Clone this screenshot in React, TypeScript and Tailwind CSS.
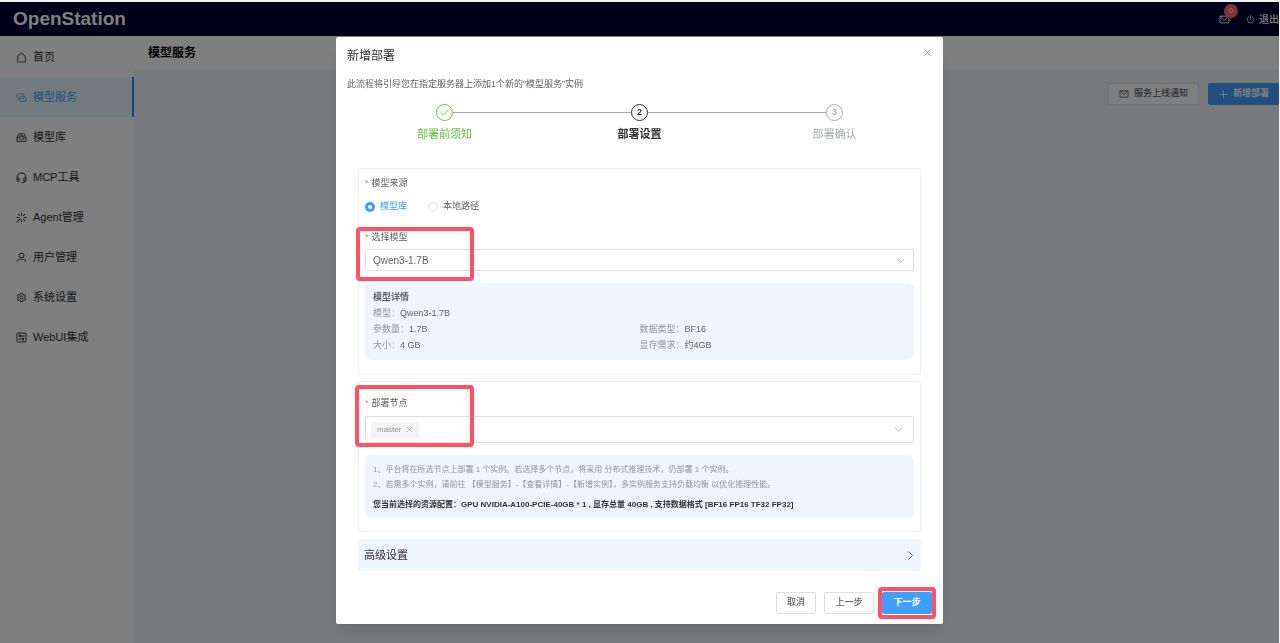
import React, { useState } from "react";
import { AiOutlineSetting } from "react-icons/ai";

const MESSAGE_PATH =
  "M128 224v512a64 64 0 0 0 64 64h640a64 64 0 0 0 64-64V224zm0-64h768a64 64 0 0 1 64 64v512a128 128 0 0 1-128 128H192A128 128 0 0 1 64 736V224a64 64 0 0 1 64-64M904 224 656.512 506.88a192 192 0 0 1-289.024 0L120 224zm-698.944 0 210.56 240.704a128 128 0 0 0 192.704 0L818.944 224z";

const HOUSE_PATH =
  "M192 413.952V896h640V413.952L512 147.328zM139.52 374.4l352-293.312a32 32 0 0 1 40.96 0l352 293.312A32 32 0 0 1 896 398.976V928a32 32 0 0 1-32 32H160a32 32 0 0 1-32-32V398.976c0-9.472 4.224-18.496 11.52-24.576";

const CONNECTION_PATH =
  "M640 384v64H448a128 128 0 0 0-128 128v128a128 128 0 0 0 128 128h320a128 128 0 0 0 128-128V576a128 128 0 0 0-64-110.848V394.88c74.56 26.368 128 97.472 128 181.056v128a192 192 0 0 1-192 192H448a192 192 0 0 1-192-192V576a192 192 0 0 1 192-192zM384 640v-64h192a128 128 0 0 0 128-128V320a128 128 0 0 0-128-128H256a128 128 0 0 0-128 128v128a128 128 0 0 0 64 110.848v70.272A192.06 192.06 0 0 1 64 448V320a192 192 0 0 1 192-192h320a192 192 0 0 1 192 192v128a192 192 0 0 1-192 192z";

const BOX_PATH =
  "M288 384h448v64H288zm96-128h256v64H384zM131.456 512H384v128h256V512h252.544L721.856 192H302.144zM896 576H704v128H320V576H128v256h768zM275.776 128h472.448a32 32 0 0 1 28.608 17.664l179.84 359.552A32 32 0 0 1 960 519.552V864a32 32 0 0 1-32 32H96a32 32 0 0 1-32-32V519.552a32 32 0 0 1 3.392-14.336l179.776-359.552A32 32 0 0 1 275.776 128";

const USER_PATH =
  "M512 512a192 192 0 1 0 0-384 192 192 0 0 0 0 384m0 64a256 256 0 1 1 0-512 256 256 0 0 1 0 512m320 320v-96a96 96 0 0 0-96-96H288a96 96 0 0 0-96 96v96a32 32 0 1 1-64 0v-96a160 160 0 0 1 160-160h448a160 160 0 0 1 160 160v96a32 32 0 1 1-64 0";

const FillIcon = ({ d, className }: { d: string; className: string }) => (
  <svg
    viewBox="0 0 1024 1024"
    fill="currentColor"
    stroke="currentColor"
    strokeWidth="16"
    className={className}
    aria-hidden="true"
  >
    <path d={d} />
  </svg>
);

const LineIcon = ({ d, className }: { d: string; className: string }) => (
  <svg
    viewBox="0 0 24 24"
    fill="none"
    stroke="currentColor"
    strokeWidth="2.2"
    strokeLinecap="round"
    strokeLinejoin="round"
    className={className}
    aria-hidden="true"
  >
    <path d={d} />
  </svg>
);

const HEADSET =
  "M2.3 15.5V12a9.7 9.7 0 0 1 19.4 0v3.5M2.3 15a2.3 2.3 0 0 1 4.6 0v3a2.3 2.3 0 0 1-4.6 0zM17.1 15a2.3 2.3 0 0 1 4.6 0v3a2.3 2.3 0 0 1-4.6 0zM19.4 20.3c-.6 1.8-2 2.7-4.4 2.7h-2";
const STICK =
  "M12 2v4.5M12 17.5V22M2 12h4.5M17.5 12H22M5 5l3.2 3.2M19 5l-3.2 3.2M19 19l-3.2-3.2M9 15l-7 7";
const SETUP =
  "M5 2.2h14a2.8 2.8 0 0 1 2.8 2.8v14a2.8 2.8 0 0 1-2.8 2.8H5A2.8 2.8 0 0 1 2.2 19V5A2.8 2.8 0 0 1 5 2.2zM7 8.5a1.8 1.8 0 1 0 3.6 0 1.8 1.8 0 1 0-3.6 0M11 8.5h7M13.4 15.5a1.8 1.8 0 1 0 3.6 0 1.8 1.8 0 1 0-3.6 0M6 15.5h7";
const POWER = "M12 2v10M7.5 4.2a9 9 0 1 0 9 0";
const CROSS = "M4 4l16 16M20 4L4 20";
const PLUS = "M12 2v20M2 12h20";
const DOWN = "M3 8l9 9 9-9";
const RIGHT = "M7 2l10 10L7 22";
const CHECK = "M3 13l6 6L21 6";

const iconSize = "w-[11px] h-[11px]";

const menu = [
  { name: "首页", icon: <FillIcon d={HOUSE_PATH} className={iconSize} /> },
  { name: "模型服务", icon: <FillIcon d={CONNECTION_PATH} className={iconSize} />, active: true },
  { name: "模型库", icon: <FillIcon d={BOX_PATH} className={iconSize} /> },
  { name: "MCP工具", icon: <LineIcon d={HEADSET} className={iconSize} /> },
  { name: "Agent管理", icon: <LineIcon d={STICK} className={iconSize} /> },
  { name: "用户管理", icon: <FillIcon d={USER_PATH} className={iconSize} /> },
  { name: "系统设置", icon: <AiOutlineSetting className={iconSize} /> },
  { name: "WebUI集成", icon: <LineIcon d={SETUP} className={iconSize} /> },
];

const Header = () => (
  <header className="flex h-[34px] items-center justify-between bg-[#000033] pl-[13px] text-white">
    <h1 className="text-[19px] font-bold">OpenStation</h1>
    <div className="flex shrink-0 items-center gap-4">
      <button className="relative" aria-label="消息">
        <FillIcon d={MESSAGE_PATH} className="h-[11px] w-[11px]" />
        <span className="absolute -top-[10px] left-[5px] flex h-[14px] w-[14px] items-center justify-center rounded-full bg-[#f56c6c] text-[8px]">
          0
        </span>
      </button>
      <button className="flex items-center gap-1 text-[10px] font-medium">
        <LineIcon d={POWER} className="h-[9px] w-[9px]" />
        退出
      </button>
    </div>
  </header>
);

const Sidebar = () => (
  <nav className="w-[134px] shrink-0 bg-white pt-px">
    {menu.map((item) => (
      <a
        key={item.name}
        href="#"
        className={
          item.active
            ? "flex h-10 items-center gap-[6px] border-r-2 border-[#1890ff] bg-[#e6f7ff] pl-4 text-[11px] text-[#409eff]"
            : "flex h-10 items-center gap-[6px] pl-4 text-[11px] text-[#303133]"
        }
      >
        {item.icon}
        {item.name}
      </a>
    ))}
  </nav>
);

const steps = [
  {
    title: "部署前须知",
    mark: <LineIcon d={CHECK} className="h-[9px] w-[9px]" />,
    color: "text-[#67c23a]",
    left: "bg-transparent",
    right: "bg-[#a8abb2]",
  },
  {
    title: "部署设置",
    mark: "2",
    color: "font-bold text-[#303133]",
    left: "bg-[#a8abb2]",
    right: "bg-[#a8abb2]",
  },
  {
    title: "部署确认",
    mark: "3",
    color: "text-[#a8abb2]",
    left: "bg-[#a8abb2]",
    right: "bg-transparent",
  },
];

const Steps = () => (
  <ol className="mt-3 grid grid-cols-3">
    {steps.map((step) => (
      <li key={step.title} className={step.color}>
        <div className="flex items-center">
          <span className={`h-px flex-1 ${step.left}`} />
          <span className="flex h-[17px] w-[17px] items-center justify-center rounded-full border border-current text-[9px] font-bold">
            {step.mark}
          </span>
          <span className={`h-px flex-1 ${step.right}`} />
        </div>
        <p className="mt-[5px] text-center text-[11px] leading-4">{step.title}</p>
      </li>
    ))}
  </ol>
);

const Required = () => <span className="mr-[3px] text-[#f56c6c]">*</span>;

const Detail = ({ label, value }: { label: string; value: string }) => (
  <p className="text-[#606266]">
    <span className="text-[#909399]">{label}：</span>
    {value}
  </p>
);

// Red frame that draws attention to a control
const Mark = ({ className }: { className: string }) => (
  <span className={`pointer-events-none absolute rounded-[4px] border-4 border-[#ff5064] ${className}`} />
);

const DeployDialog = () => {
  const [source, setSource] = useState("library");
  const [model, setModel] = useState("Qwen3-1.7B");
  const [nodes, setNodes] = useState(["master"]);

  const radioClass =
    "h-[10px] w-[10px] appearance-none rounded-full border border-[#dcdfe6] bg-white checked:border-[3px] checked:border-[#409eff]";

  return (
    <div
      role="dialog"
      aria-labelledby="dialog-title"
      className="mx-auto mt-[35px] w-full max-w-[607px] rounded-[2px] bg-white px-[11px] pt-[11px] pb-[10px] text-[9px] text-[#606266] shadow-lg"
    >
      <div className="flex items-start justify-between">
        <h2 id="dialog-title" className="text-[12px] leading-4 text-[#303133]">
          新增部署
        </h2>
        <button aria-label="关闭" className="text-[#909399]">
          <LineIcon d={CROSS} className="h-[9px] w-[9px]" />
        </button>
      </div>
      <p className="mt-3 leading-4">此流程将引导您在指定服务器上添加1个新的“模型服务”实例</p>
      <Steps />

      <div className="mt-[26px] px-[11px]">
        <section className="rounded-[2px] border border-[#ebeef5] px-[6px] pt-[6px] pb-[14px]">
          <fieldset>
            <legend className="leading-4">
              <Required />
              模型来源
            </legend>
            <div className="mt-2 flex h-4 items-center gap-[21px]">
              <label
                className={`flex items-center gap-[5px] ${source === "library" ? "text-[#409eff]" : ""}`}
              >
                <input
                  type="radio"
                  name="source"
                  className={radioClass}
                  checked={source === "library"}
                  onChange={() => setSource("library")}
                />
                模型库
              </label>
              <label
                className={`flex items-center gap-[5px] ${source === "local" ? "text-[#409eff]" : ""}`}
              >
                <input
                  type="radio"
                  name="source"
                  className={radioClass}
                  checked={source === "local"}
                  onChange={() => setSource("local")}
                />
                本地路径
              </label>
            </div>
          </fieldset>

          <div className="relative mt-[14px]">
            <label htmlFor="model" className="block leading-4">
              <Required />
              选择模型
            </label>
            <div className="mt-1 flex h-[22px] items-center rounded-[2px] border border-[#dcdfe6] pr-2">
              <select
                id="model"
                className="h-full flex-1 appearance-none bg-transparent pl-[7px] text-[10px] outline-none"
                value={model}
                onChange={(e) => setModel(e.target.value)}
              >
                <option>Qwen3-1.7B</option>
              </select>
              <LineIcon d={DOWN} className="h-[9px] w-[9px] text-[#a8abb2]" />
            </div>
            <Mark className="-top-[2px] -left-[9px] h-[54px] w-[118px]" />
          </div>

          <div className="mt-3 rounded-[6px] bg-[#eff5ff] px-2 pt-[6px] pb-[7px] leading-4">
            <h3 className="font-bold">模型详情</h3>
            <Detail label="模型" value={model} />
            <div className="grid grid-cols-2">
              <Detail label="参数量" value="1.7B" />
              <Detail label="数据类型" value="BF16" />
              <Detail label="大小" value="4 GB" />
              <Detail label="显存需求" value="约4GB" />
            </div>
          </div>
        </section>

        <section className="mt-[6px] rounded-[2px] border border-[#ebeef5] px-[6px] pt-[13px] pb-[13px]">
          <div className="relative">
            <label htmlFor="nodes" className="block leading-4">
              <Required />
              部署节点
            </label>
            <div className="mt-[5px] flex h-[27px] items-center rounded-[2px] border border-[#dcdfe6] pr-[10px] pl-[5px]">
              {nodes.map((node) => (
                <span
                  key={node}
                  className="flex h-4 items-center gap-[5px] rounded-[2px] bg-[#f4f4f5] px-[6px] text-[8px] text-[#909399]"
                >
                  {node}
                  <button
                    aria-label={`移除 ${node}`}
                    onClick={() => setNodes(nodes.filter((n) => n !== node))}
                  >
                    <LineIcon d={CROSS} className="h-[7px] w-[7px]" />
                  </button>
                </span>
              ))}
              <input id="nodes" type="text" className="min-w-0 flex-1 bg-transparent outline-none" />
              <LineIcon d={DOWN} className="h-[9px] w-[9px] text-[#a8abb2]" />
            </div>
            <Mark className="-top-[10px] -left-[10px] h-[62px] w-[119px]" />
          </div>

          <div className="mt-3 rounded-[6px] bg-[#eff5ff] px-2 pt-[7px] pb-[6px] text-[8px] leading-[15px] text-[#909399]">
            <p>1、平台将在所选节点上部署 1 个实例。若选择多个节点，将采用 分布式推理技术，仍部署 1 个实例。</p>
            <p>2、若需多个实例，请前往 【模型服务】-【查看详情】-【新增实例】，多实例服务支持负载均衡 以优化推理性能。</p>
            <p className="mt-[5px] font-bold text-[#303133]">
              您当前选择的资源配置：GPU NVIDIA-A100-PCIE-40GB * 1 , 显存总量 40GB , 支持数据格式 [BF16 FP16 TF32 FP32]
            </p>
          </div>
        </section>

        <button className="mt-[7px] flex h-8 w-full items-center justify-between bg-[#eff5ff] px-[6px] text-[11px] text-[#303133]">
          高级设置
          <LineIcon d={RIGHT} className="h-[9px] w-[9px]" />
        </button>
      </div>

      <div className="mt-[21px] flex justify-end gap-2">
        <button className="h-[22px] w-10 rounded-[2px] border border-[#dcdfe6] font-medium">取消</button>
        <button className="h-[22px] w-[50px] rounded-[2px] border border-[#dcdfe6] font-medium">上一步</button>
        <div className="relative">
          <button className="h-[22px] w-[50px] rounded-[2px] bg-[#409eff] font-bold text-white">下一步</button>
          <Mark className="-top-[5px] -right-[4px] -left-[4px] h-[32px]" />
        </div>
      </div>
    </div>
  );
};

const App = () => {
  return (
    <div className="min-h-screen bg-[#f0f4f9] pt-0.5 pr-px font-['Liberation_Sans','Noto_Sans_CJK_SC',sans-serif]">
      <div className="flex min-h-[calc(100vh-2px)] flex-col overflow-hidden">
        <Header />
        <div className="flex flex-1">
          <Sidebar />
          <main className="min-w-0 flex-1 bg-[#f0f2f5]">
            <div className="flex h-[33px] items-center bg-white pl-[14px] text-[12px] font-bold text-black">
              模型服务
            </div>
            <div className="mt-[14px] -mr-px flex justify-end gap-[9px] text-[9px] font-medium">
              <button className="flex h-[22px] items-center gap-[5px] rounded-[2px] border border-[#dcdfe6] bg-white px-[10px] text-[#606266]">
                <FillIcon d={MESSAGE_PATH} className="h-[10px] w-[10px]" />
                服务上线通知
              </button>
              <button className="flex h-[22px] items-center gap-[5px] rounded-[2px] bg-[#409eff] px-[11px] font-bold text-white">
                <LineIcon d={PLUS} className="h-[9px] w-[9px]" />
                新增部署
              </button>
            </div>
          </main>
        </div>
      </div>

      <div className="fixed top-0.5 right-px bottom-0 left-0 overflow-auto bg-black/50">
        <DeployDialog />
      </div>
    </div>
  );
};

export default App;
